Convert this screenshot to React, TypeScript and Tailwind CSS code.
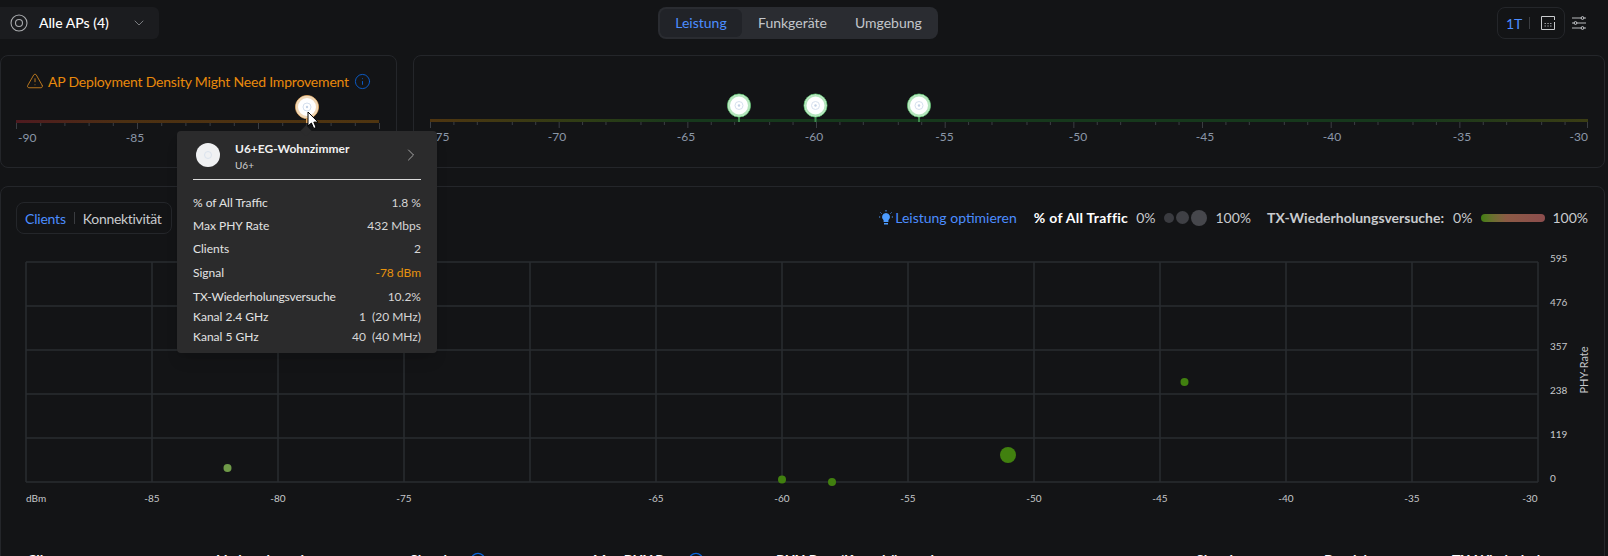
import React from 'react';
import { ChevronDown, ChevronRight, Info, TriangleAlert } from 'lucide-react';

const gridXs = [26, 152, 278, 404, 530, 656, 782, 908, 1034, 1160, 1286, 1412, 1538];
const gridYs = [262, 306, 350, 394, 438, 482];

const xLabels = [
  { x: 152, t: '-85' }, { x: 278, t: '-80' }, { x: 404, t: '-75' }, { x: 656, t: '-65' },
  { x: 782, t: '-60' }, { x: 908, t: '-55' }, { x: 1034, t: '-50' }, { x: 1160, t: '-45' },
  { x: 1286, t: '-40' }, { x: 1412, t: '-35' }, { x: 1530, t: '-30' },
];
const yLabels = ['595', '476', '357', '238', '119', '0'];

const points = [
  { x: 227.5, y: 468, r: 4, c: '#6f9a48' },
  { x: 782, y: 479.5, r: 4, c: '#41800f' },
  { x: 832, y: 482, r: 4, c: '#41800f' },
  { x: 1008, y: 455, r: 8, c: '#41800f' },
  { x: 1184.5, y: 382, r: 4, c: '#41800f' },
];

const rows = [
  { k: '% of All Traffic', v: '1.8 %', mt: 'mt-0', kc: '' },
  { k: 'Max PHY Rate', v: '432 Mbps', mt: 'mt-[7px]', kc: '' },
  { k: 'Clients', v: '2', mt: 'mt-[7px]', kc: '' },
  { k: 'Signal', v: '-78 dBm', mt: 'mt-[8px]', kc: '', warn: true },
  { k: 'TX-Wiederholungsversuche', v: '10.2%', mt: 'mt-[8px]', kc: 'tracking-[-0.15px]' },
  { k: 'Kanal 2.4 GHz', v: '1  (20 MHz)', mt: 'mt-[4px]', kc: '' },
  { k: 'Kanal 5 GHz', v: '40  (40 MHz)', mt: 'mt-[4px]', kc: '' },
];

// label centres on the right scale, they are not quite evenly spaced
const rightLabels = [
  { x: 143, t: '-70' }, { x: 272, t: '-65' }, { x: 400, t: '-60' }, { x: 530.5, t: '-55' },
  { x: 664, t: '-50' }, { x: 791, t: '-45' }, { x: 918, t: '-40' }, { x: 1048, t: '-35' },
];

// small access point puck used on the signal scales
const Puck = ({ cx, cy, ring, pale }: { cx: number; cy: number; ring: string; pale: string }) => (
  <g>
    <circle cx={cx} cy={cy} r={11.5} fill="#fff" stroke={ring} strokeWidth={1} />
    <circle cx={cx} cy={cy} r={10} fill="#fff" stroke={pale} strokeWidth={2} />
    <circle cx={cx} cy={cy} r={4} fill="none" stroke="#d6e0ee" strokeWidth={1} />
    <circle cx={cx} cy={cy} r={1.2} fill="#c4d2e6" />
  </g>
);

const LeftScale = () => {
  const ticks = Array.from({ length: 16 }, (_, i) => i);
  return (
    <svg width={396} height={75} className="block">
      <defs>
        <linearGradient id="leftBar" x1="0" x2="1" y1="0" y2="0">
          <stop offset="0" stopColor="#4f1a20" />
          <stop offset="0.3" stopColor="#4c3012" />
          <stop offset="1" stopColor="#4f3510" />
        </linearGradient>
      </defs>
      <rect x={15} y={28} width={363} height={3} fill="url(#leftBar)" />
      {ticks.map((i) => (
        <rect key={i} x={15 + i * 24.2} y={31} width={1} height={i % 5 === 0 ? 6 : 3} fill="#3b3e43" />
      ))}
      <text x={17} y={49.5} fontSize={12} fill="#8b97a8">-90</text>
      <text x={134} y={49.5} fontSize={12} fill="#8b97a8" textAnchor="middle">-85</text>
      <rect x={305} y={26} width={2} height={5} fill="#d9a05b" />
      <Puck cx={306} cy={15} ring="#d9a05b" pale="#f0d7b5" />
    </svg>
  );
};

const RightScale = () => {
  const step = 128.67;
  const inner = [0, 23.4, 46.8, 81.8, 105.2];
  const ticks = Array.from({ length: 9 }, (_, s) => inner.map((d) => 16 + s * step + d)).flat();
  return (
    <svg width={1190} height={111} className="block">
      <defs>
        <linearGradient id="rightBar" x1="0" x2="1" y1="0" y2="0">
          <stop offset="0" stopColor="#4f3510" />
          <stop offset="0.14" stopColor="#2d3d15" />
          <stop offset="0.22" stopColor="#16381c" />
          <stop offset="0.85" stopColor="#16381c" />
          <stop offset="1" stopColor="#3b3d14" />
        </linearGradient>
      </defs>
      <rect x={16} y={63} width={1158} height={3} fill="url(#rightBar)" />
      {ticks.map((x, i) => (
        <rect key={i} x={x} y={66} width={1} height={i % 5 === 0 ? 6 : 3} fill="#3b3e43" />
      ))}
      <rect x={1173} y={66} width={1} height={6} fill="#3b3e43" />
      {rightLabels.map((l) => (
        <text key={l.t} x={l.x} y={85} fontSize={12} fill="#8b97a8" textAnchor="middle">{l.t}</text>
      ))}
      <text x={1174} y={85} fontSize={12} fill="#8b97a8" textAnchor="end">-30</text>
      <text x={17} y={85} fontSize={12} fill="#8b97a8">-75</text>
      {[325, 401.5, 505].map((x) => (
        <g key={x}>
          <rect x={x - 1} y={60} width={2} height={6} fill="#3f8a4e" />
          <Puck cx={x} cy={49.5} ring="#56b868" pale="#b5e6bd" />
        </g>
      ))}
    </svg>
  );
};

const ScatterChart = () => (
  <svg width={1603} height={270} viewBox="1 250 1603 270" className="block">
    {gridXs.map((x) => (
      <line key={x} x1={x} x2={x} y1={262} y2={482} stroke="#2a2c30" strokeWidth={1.5} />
    ))}
    {gridYs.map((y) => (
      <line key={y} x1={26} x2={1538} y1={y} y2={y} stroke="#2a2c30" strokeWidth={1.5} />
    ))}
    {points.map((p) => (
      <circle key={p.x} cx={p.x} cy={p.y} r={p.r} fill={p.c} />
    ))}
    {xLabels.map((l) => (
      <text key={l.t} x={l.x} y={502} fontSize={10} fill="#c6c8cb" textAnchor="middle">{l.t}</text>
    ))}
    <text x={26} y={502} fontSize={10} fill="#c6c8cb">dBm</text>
    {yLabels.map((t, i) => (
      <text key={t} x={1550} y={gridYs[i] - 0.5} fontSize={10} fill="#c6c8cb">{t}</text>
    ))}
    <text x={1588} y={370} fontSize={11} fill="#c6c8cb" textAnchor="middle" transform="rotate(-90 1588 370)">PHY-Rate</text>
  </svg>
);

const App = () => {
  return (
    <div className="relative h-[556px] w-[1608px] overflow-hidden bg-[#131416] font-[Lato,sans-serif] text-[14px] text-[#c9cbce]">
      {/* Top bar */}
      <div className="flex h-[55px] items-start pt-[7px] pr-[22px]">
        <div className="flex h-[32px] w-[159px] items-center rounded-r-[6px] bg-[#1b1c1f] pb-[1px] pl-[10px]">
          <svg width={18} height={18} viewBox="0 0 18 18" fill="none" stroke="#a9abae" strokeWidth={1.1}>
            <circle cx={9} cy={9} r={8} />
            <circle cx={9} cy={9} r={3.5} />
          </svg>
          <span className="ml-[11px] font-medium text-white">Alle APs (4)</span>
          <ChevronDown size={16} strokeWidth={1.5} className="ml-[22px] text-[#7a7c80]" />
        </div>
        <div className="ml-[499px] flex h-[32px] w-[280px] items-center rounded-[8px] bg-[#2a2c31] px-[2px]">
          <div className="flex h-[28px] w-[82px] items-center justify-center rounded-[6px] bg-[#212328] pb-[1px] text-[#4c8dff]">Leistung</div>
          <div className="ml-[16px] pb-[1px] text-[#c3c6cb]">Funkgeräte</div>
          <div className="ml-[28px] pb-[1px] text-[#c3c6cb]">Umgebung</div>
        </div>
        <div className="ml-auto flex items-center gap-[7px]">
          <div className="flex h-[32px] w-[68px] items-center rounded-[8px] border border-[#24262a] pl-[8px]">
            <span className="text-[#4c8dff]">1T</span>
            <div className="ml-[7px] h-[12px] w-px bg-[#3a3c40]" />
            <svg width={14} height={14} viewBox="0 0 14 14" fill="none" stroke="#c9cbce" className="ml-[11px]">
              <path d="M13.5 4V.5H.5v13h13V6" />
              <path d="M3.5 7.5h1.5M6.3 7.5h1.5M9 7.5h1.5M3.5 10h1.5M6.3 10h1.5M9 10h1.5" stroke="#9a9ca0" />
            </svg>
          </div>
          <svg width={14} height={14} viewBox="0 0 14 14" fill="none" stroke="#c9cbce">
            <path d="M0 2h14M0 7h14M0 12h14" strokeWidth={0.9} />
            <circle cx={10.5} cy={2} r={1.4} fill="#131416" />
            <circle cx={3.5} cy={7} r={1.4} fill="#131416" />
            <circle cx={10.5} cy={12} r={1.4} fill="#131416" />
          </svg>
        </div>
      </div>

      {/* Signal scales */}
      <div className="flex gap-[16px] pr-[3px]">
        <div className="h-[113px] w-[397px] rounded-[8px] border border-[#24262a]">
          <div className="flex h-[36px] items-center pt-[16px] pb-[2px] pl-[25px]">
            <TriangleAlert size={18} strokeWidth={1.1} className="text-[#d98a1f]" />
            <span className="ml-[4px] tracking-[-0.19px] text-[#e8890c]">AP Deployment Density Might Need Improvement</span>
            <Info size={17} strokeWidth={1.25} className="ml-[5px] text-[#0a63d8]" />
          </div>
          <LeftScale />
        </div>
        <div className="h-[113px] flex-1 rounded-[8px] border border-[#24262a]">
          <RightScale />
        </div>
      </div>

      {/* Clients panel */}
      <div className="mt-[18px] mr-[3px] h-[400px] rounded-[8px] border border-[#24262a]">
        <div className="flex h-[63px] items-start pt-[15px] pr-[16px] pl-[15px]">
          <div className="flex h-[32px] w-[156px] items-center rounded-[8px] border border-[#24262a] pl-[8px]">
            <span className="tracking-[-0.2px] text-[#4c8dff]">Clients</span>
            <div className="ml-[8px] h-[12px] w-px bg-[#3a3c40]" />
            <span className="ml-[8px] tracking-[-0.3px] text-[#c9cbce]">Konnektivität</span>
          </div>
          <div className="ml-auto flex h-[31px] items-center">
            <svg width={14} height={16} viewBox="0 0 14 16" fill="#4c9bff">
              <path d="M7 3a4 4 0 0 0-2.4 7.2V12h4.8v-1.8A4 4 0 0 0 7 3z" />
              <path d="M5 13h4v1.5H5z" />
              <path d="M7 0v1.5M1.5 2.5l1 1M12.5 2.5l-1 1M0 7h1.2M12.8 7H14" stroke="#4c9bff" strokeWidth={1} />
            </svg>
            <span className="ml-[2px] text-[#4c8dff]">Leistung optimieren</span>
            <span className="ml-[17px] font-bold tracking-[0.3px] text-white">% of All Traffic</span>
            <span className="ml-[8px]">0%</span>
            <div className="ml-[9px] flex items-center gap-[2px]">
              <div className="h-[10px] w-[10px] rounded-full bg-[#3a3b40]" />
              <div className="h-[13px] w-[13px] rounded-full bg-[#3f4045]" />
              <div className="h-[16px] w-[16px] rounded-full bg-[#46474c]" />
            </div>
            <span className="ml-[8px]">100%</span>
            <span className="ml-[16px] font-bold text-[#c9cbce]">TX-Wiederholungsversuche:</span>
            <span className="ml-[9px]">0%</span>
            <div className="ml-[9px] h-[8px] w-[64px] rounded-full bg-gradient-to-r from-[#3f7f0e] via-[#8c5a45] via-40% to-[#8c4d4d]" />
            <span className="ml-[7px]">100%</span>
          </div>
        </div>
        <ScatterChart />
        {/* table header, cut off by the page edge */}
        <div className="flex pt-[30px] pl-[26px] text-[14px] leading-[20px] font-bold text-white">
          <div className="w-[190px]">Client</div>
          <div className="w-[193px]">Verbunden mit</div>
          <div className="flex w-[183px] items-center gap-[23px]">Signal <Info size={16} className="text-[#0a63d8]" /></div>
          <div className="flex w-[183px] items-center gap-[4px]">Max PHY Rate <Info size={16} className="text-[#0a63d8]" /></div>
          <div className="w-[420px]">PHY-Rate/Kapazitätsauslastung</div>
          <div className="w-[128px]">Signal</div>
          <div className="w-[128px]">Bereich</div>
          <div>TX-Wiederholungen</div>
        </div>
      </div>

      {/* Tooltip */}
      <div className="absolute top-[131px] left-[177px] w-[260px] rounded-[4px] bg-[#2b2b2c] px-[16px] pb-[8px] text-[12px] leading-[16px] text-[#e3e3e3] shadow-lg">
        <div className="absolute -top-[4px] left-[125px] h-[8px] w-[8px] rotate-45 bg-[#2b2b2c]" />
        <div className="flex h-[49px] items-center border-b border-[#dcdcdc]">
          <div className="ml-[3px] flex h-[24px] w-[24px] items-center justify-center rounded-full bg-[#f0f1f3]">
            <div className="h-[8px] w-[8px] rounded-full border border-[#dbe3ee]" />
          </div>
          <div className="ml-[15px] flex-1 pt-[2px]">
            <div className="font-bold text-[#f0f0f0]">U6+EG-Wohnzimmer</div>
            <div className="mt-[2px] text-[10px] leading-[13px] text-[#cfcfcf]">U6+</div>
          </div>
          <ChevronRight size={20} strokeWidth={1} className="text-[#bdbdbd]" />
        </div>
        <div className="pt-[15px]">
          {rows.map((r) => (
            <div key={r.k} className={`flex justify-between ${r.mt}`}>
              <span className={r.kc}>{r.k}</span>
              <span className={`whitespace-pre ${r.warn ? 'text-[#e8930c]' : 'text-[#d6d6d6]'}`}>{r.v}</span>
            </div>
          ))}
        </div>
      </div>

      {/* Mouse pointer */}
      <svg width={12} height={19} viewBox="0 0 12 19" className="absolute top-[111px] left-[307px]">
        <path d="M1 1v14l3.4-3 2.3 5.5 2.4-1-2.3-5.4H11z" fill="#fff" stroke="#000" strokeWidth={1} />
      </svg>
    </div>
  );
};

export default App;
